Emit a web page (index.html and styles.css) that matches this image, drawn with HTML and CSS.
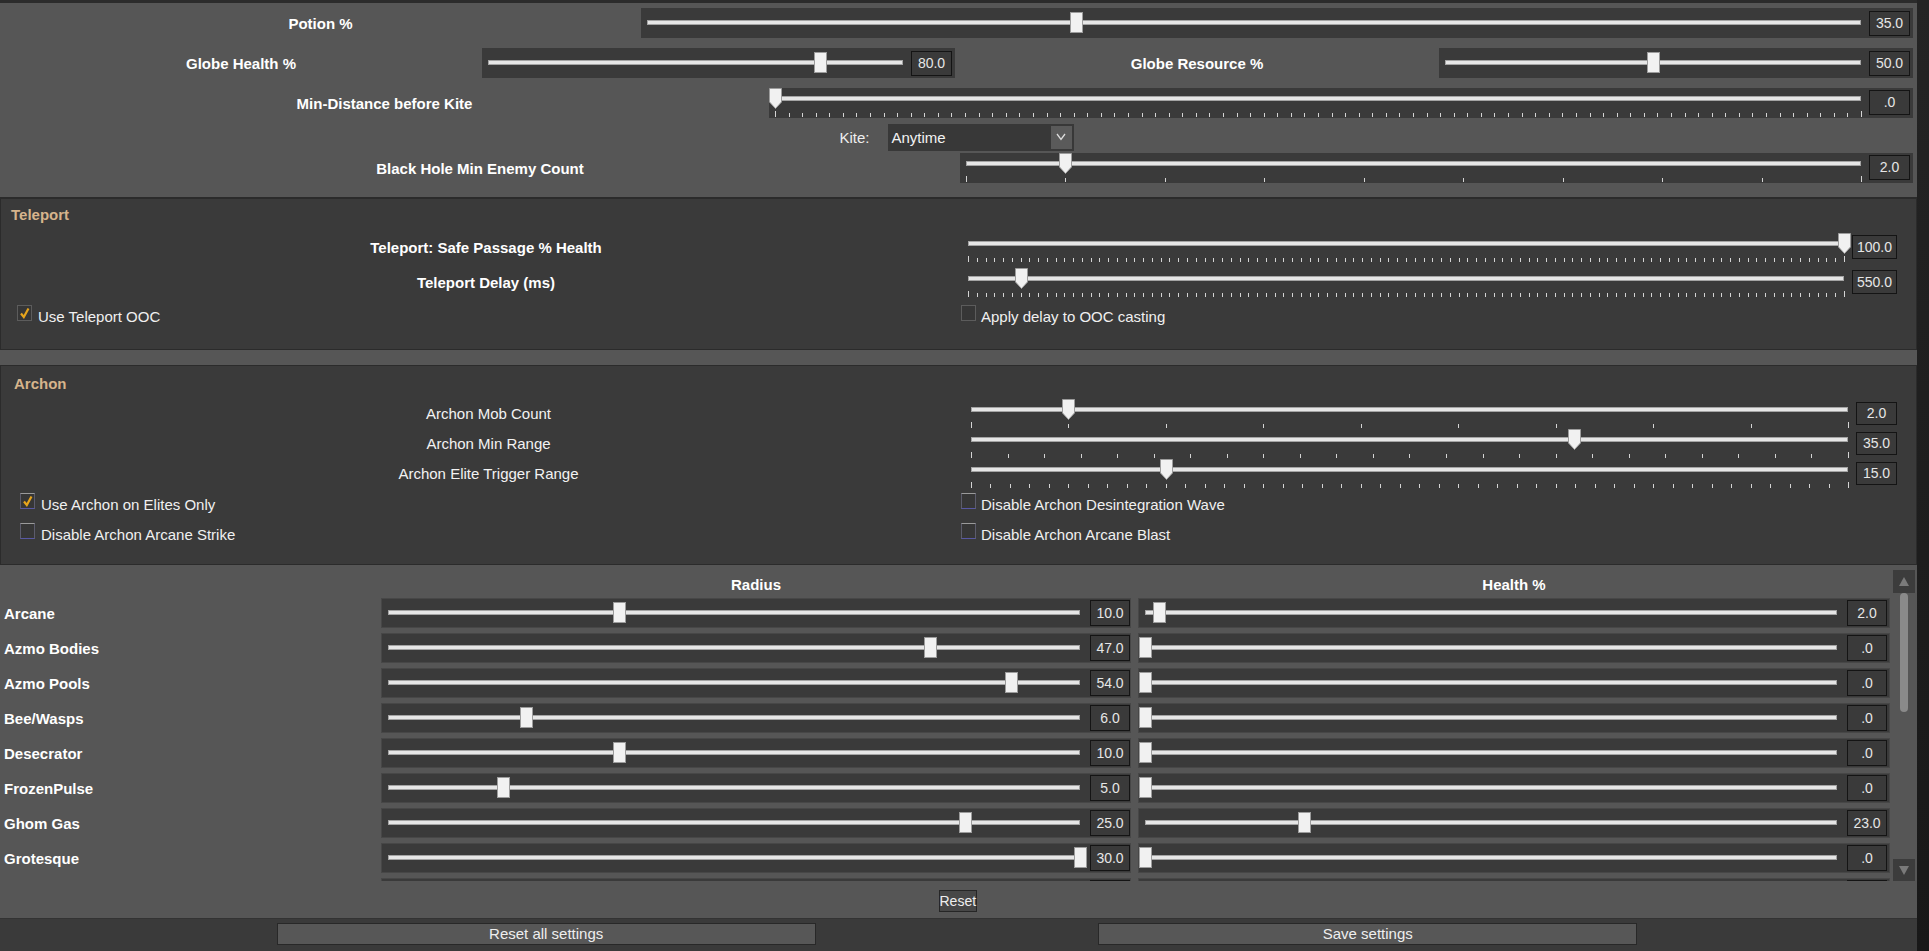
FILE: index.html
```html
<!DOCTYPE html>
<html>
<head>
<meta charset="utf-8">
<title>Settings</title>
<link rel="stylesheet" href="styles.css">
</head>
<body>
<div class="window">
  <div class="main">
    <section class="general">
      <div class="row row-potion">
        <div class="lbl">Potion %</div>
        <div class="sbox">
          <div class="slider" style="--v:.353"><div class="track"></div><div class="thumb"></div></div>
          <div class="val">35.0</div>
        </div>
      </div>
      <div class="row row-globe">
        <div class="lbl">Globe Health %</div>
        <div class="sbox">
          <div class="slider" style="--v:.8"><div class="track"></div><div class="thumb"></div></div>
          <div class="val">80.0</div>
        </div>
        <div class="lbl">Globe Resource %</div>
        <div class="sbox">
          <div class="slider" style="--v:.5"><div class="track"></div><div class="thumb"></div></div>
          <div class="val">50.0</div>
        </div>
      </div>
      <div class="row row-dist">
        <div class="lbl">Min-Distance before Kite</div>
        <div class="sbox ticked">
          <div class="slider" style="--v:0">
            <div class="track"></div><div class="ticks" style="--n:80"></div>
            <svg class="pointer" viewBox="0 0 13 21" width="13" height="21"><path d="M.5 .5h12v13.5l-6 6.5-6-6.5z" fill="#f1f1f1" stroke="#9c9c9c"/></svg>
          </div>
          <div class="val">.0</div>
        </div>
      </div>
      <div class="row row-kite">
        <span class="kite-lbl">Kite:</span>
        <div class="select">
          <span>Anytime</span>
          <span class="select-arrow"><svg viewBox="0 0 10 8" width="10" height="8"><path d="M1 1l4 5.5 4-5.5" fill="none" stroke="#dcdcdc" stroke-width="1.3"/></svg></span>
        </div>
      </div>
      <div class="row row-bh">
        <div class="lbl">Black Hole Min Enemy Count</div>
        <div class="sbox ticked">
          <div class="slider" style="--v:.1111">
            <div class="track"></div><div class="ticks" style="--n:9"></div>
            <svg class="pointer" viewBox="0 0 13 21" width="13" height="21"><path d="M.5 .5h12v13.5l-6 6.5-6-6.5z" fill="#f1f1f1" stroke="#9c9c9c"/></svg>
          </div>
          <div class="val">2.0</div>
        </div>
      </div>
    </section>

    <section class="group teleport">
      <div class="group-title">Teleport</div>
      <div class="grow">
        <div class="glbl bold">Teleport: Safe Passage % Health</div>
        <div class="slider" style="--v:1">
          <div class="track"></div><div class="ticks" style="--n:100"></div>
          <svg class="pointer" viewBox="0 0 13 21" width="13" height="21"><path d="M.5 .5h12v13.5l-6 6.5-6-6.5z" fill="#f1f1f1" stroke="#9c9c9c"/></svg>
        </div>
        <div class="val wide">100.0</div>
      </div>
      <div class="grow">
        <div class="glbl bold">Teleport Delay (ms)</div>
        <div class="slider" style="--v:.061">
          <div class="track"></div><div class="ticks" style="--n:100"></div>
          <svg class="pointer" viewBox="0 0 13 21" width="13" height="21"><path d="M.5 .5h12v13.5l-6 6.5-6-6.5z" fill="#f1f1f1" stroke="#9c9c9c"/></svg>
        </div>
        <div class="val wide">550.0</div>
      </div>
      <div class="crow">
        <label class="check first plain"><span class="box"><svg viewBox="0 0 14 15" width="14" height="15"><path d="M3 7.5l2.8 3.5L10.5 2.5" fill="none" stroke="#e6a41c" stroke-width="2.2"/></svg></span><span class="ctext">Use Teleport OOC</span></label>
        <label class="check plain"><span class="box"></span><span class="ctext">Apply delay to OOC casting</span></label>
      </div>
    </section>

    <section class="group archon">
      <div class="group-title">Archon</div>
      <div class="grow">
        <div class="glbl">Archon Mob Count</div>
        <div class="slider" style="--v:.1111">
          <div class="track"></div><div class="ticks" style="--n:9"></div>
          <svg class="pointer" viewBox="0 0 13 21" width="13" height="21"><path d="M.5 .5h12v13.5l-6 6.5-6-6.5z" fill="#f1f1f1" stroke="#9c9c9c"/></svg>
        </div>
        <div class="val">2.0</div>
      </div>
      <div class="grow">
        <div class="glbl">Archon Min Range</div>
        <div class="slider" style="--v:.6875">
          <div class="track"></div><div class="ticks" style="--n:24"></div>
          <svg class="pointer" viewBox="0 0 13 21" width="13" height="21"><path d="M.5 .5h12v13.5l-6 6.5-6-6.5z" fill="#f1f1f1" stroke="#9c9c9c"/></svg>
        </div>
        <div class="val">35.0</div>
      </div>
      <div class="grow">
        <div class="glbl">Archon Elite Trigger Range</div>
        <div class="slider" style="--v:.2222">
          <div class="track"></div><div class="ticks" style="--n:45"></div>
          <svg class="pointer" viewBox="0 0 13 21" width="13" height="21"><path d="M.5 .5h12v13.5l-6 6.5-6-6.5z" fill="#f1f1f1" stroke="#9c9c9c"/></svg>
        </div>
        <div class="val">15.0</div>
      </div>
      <div class="crow">
        <label class="check first"><span class="box"><svg viewBox="0 0 14 15" width="14" height="15"><path d="M3 7.5l2.8 3.5L10.5 2.5" fill="none" stroke="#e6a41c" stroke-width="2.2"/></svg></span><span class="ctext">Use Archon on Elites Only</span></label>
        <label class="check"><span class="box"></span><span class="ctext">Disable Archon Desintegration Wave</span></label>
      </div>
      <div class="crow crow-2">
        <label class="check first"><span class="box"></span><span class="ctext">Disable Archon Arcane Strike</span></label>
        <label class="check"><span class="box"></span><span class="ctext">Disable Archon Arcane Blast</span></label>
      </div>
    </section>

    <section class="avoid">
      <div class="scroll">
        <div class="scroll-content">
          <div class="list-head"><div></div><div>Radius</div><div class="head-health">Health %</div></div>

          <div class="list-row"><div class="name">Arcane</div>
            <div class="lbox"><div class="slider" style="--v:.3333"><div class="track"></div><div class="thumb"></div></div><div class="val">10.0</div></div>
            <div class="lbox health"><div class="slider" style="--v:.02"><div class="track"></div><div class="thumb"></div></div><div class="val">2.0</div></div>
          </div>
          <div class="list-row"><div class="name">Azmo Bodies</div>
            <div class="lbox"><div class="slider" style="--v:.7833"><div class="track"></div><div class="thumb"></div></div><div class="val">47.0</div></div>
            <div class="lbox health"><div class="slider" style="--v:0"><div class="track"></div><div class="thumb"></div></div><div class="val">.0</div></div>
          </div>
          <div class="list-row"><div class="name">Azmo Pools</div>
            <div class="lbox"><div class="slider" style="--v:.9"><div class="track"></div><div class="thumb"></div></div><div class="val">54.0</div></div>
            <div class="lbox health"><div class="slider" style="--v:0"><div class="track"></div><div class="thumb"></div></div><div class="val">.0</div></div>
          </div>
          <div class="list-row"><div class="name">Bee/Wasps</div>
            <div class="lbox"><div class="slider" style="--v:.2"><div class="track"></div><div class="thumb"></div></div><div class="val">6.0</div></div>
            <div class="lbox health"><div class="slider" style="--v:0"><div class="track"></div><div class="thumb"></div></div><div class="val">.0</div></div>
          </div>
          <div class="list-row"><div class="name">Desecrator</div>
            <div class="lbox"><div class="slider" style="--v:.3333"><div class="track"></div><div class="thumb"></div></div><div class="val">10.0</div></div>
            <div class="lbox health"><div class="slider" style="--v:0"><div class="track"></div><div class="thumb"></div></div><div class="val">.0</div></div>
          </div>
          <div class="list-row"><div class="name">FrozenPulse</div>
            <div class="lbox"><div class="slider" style="--v:.1667"><div class="track"></div><div class="thumb"></div></div><div class="val">5.0</div></div>
            <div class="lbox health"><div class="slider" style="--v:0"><div class="track"></div><div class="thumb"></div></div><div class="val">.0</div></div>
          </div>
          <div class="list-row"><div class="name">Ghom Gas</div>
            <div class="lbox"><div class="slider" style="--v:.8333"><div class="track"></div><div class="thumb"></div></div><div class="val">25.0</div></div>
            <div class="lbox health"><div class="slider" style="--v:.23"><div class="track"></div><div class="thumb"></div></div><div class="val">23.0</div></div>
          </div>
          <div class="list-row"><div class="name">Grotesque</div>
            <div class="lbox"><div class="slider" style="--v:1"><div class="track"></div><div class="thumb"></div></div><div class="val">30.0</div></div>
            <div class="lbox health"><div class="slider" style="--v:0"><div class="track"></div><div class="thumb"></div></div><div class="val">.0</div></div>
          </div>
          <div class="list-row"><div class="name"></div>
            <div class="lbox"><div class="slider" style="--v:1"><div class="track"></div><div class="thumb"></div></div><div class="val"></div></div>
            <div class="lbox health"><div class="slider" style="--v:1"><div class="track"></div><div class="thumb"></div></div><div class="val"></div></div>
          </div>
        </div>
        <div class="vscroll">
          <div class="sb-btn up"><svg viewBox="0 0 10 9" width="10" height="9"><path d="M5 0L10 9H0z" fill="#7a7a7a"/></svg></div>
          <div class="sb-track"><div class="sb-thumb"></div></div>
          <div class="sb-btn down"><svg viewBox="0 0 10 9" width="10" height="9"><path d="M0 0H10L5 9z" fill="#7a7a7a"/></svg></div>
        </div>
      </div>
      <div class="reset-row"><button class="btn-reset">Reset</button></div>
    </section>

    <footer class="footer">
      <button class="btn btn-left">Reset all settings</button>
      <button class="btn btn-right">Save settings</button>
    </footer>
  </div>
  <div class="edge"></div>
</div>
</body>
</html>
```

FILE: styles.css
```css
* { box-sizing: border-box; }
html, body { margin: 0; padding: 0; }
body {
  width: 1929px;
  height: 951px;
  overflow: hidden;
  background: #1d1d1d;
  font-family: "Liberation Sans", Arial, sans-serif;
  font-size: 15px;
  color: #fff;
}
button { font-family: inherit; }

.window { display: flex; height: 951px; }
.main {
  width: 1917px;
  height: 951px;
  display: flex;
  flex-direction: column;
  background: #565656;
}
.edge { flex: 1; background: linear-gradient(#242424, #181818); }

/* ---------- general block ---------- */
.general {
  height: 198px;
  border-top: 3px solid #2b2b2b;
  border-bottom: 1px solid #2b2b2b;
  padding: 5px 4px 0 0;
}
.row { display: grid; align-items: center; height: 30px; }
.row-potion { grid-template-columns: 641px 1fr; margin-bottom: 10px; }
.row-globe { grid-template-columns: 482px 473px 484px 1fr; margin-bottom: 10px; }
.row-dist { grid-template-columns: 769px 1fr; margin-bottom: 6px; }
.row-bh { grid-template-columns: 960px 1fr; }
.row-kite {
  display: flex;
  justify-content: center;
  align-items: center;
  height: 26px;
  margin-bottom: 3px;
}
.lbl { text-align: center; font-weight: bold; }

.sbox {
  display: flex;
  height: 30px;
  background: #3a3a3a;
  padding-right: 3px;
}

/* ---------- slider ---------- */
.slider { position: relative; flex: 1; height: 30px; }
.track {
  position: absolute;
  left: 6px;
  right: 7px;
  top: 12px;
  height: 5px;
  background: #e6e6e6;
  border: 1px solid #a4a4a4;
}
.thumb {
  position: absolute;
  top: 4px;
  left: calc(var(--v) * (100% - 13px));
  width: 13px;
  height: 21px;
  background: #f1f1f1;
  border: 1px solid #9c9c9c;
}
.pointer {
  position: absolute;
  top: 0;
  left: calc(var(--v) * (100% - 13px));
  display: block;
}
.ticked .track, .grow .track { top: 8px; }
.ticks {
  position: absolute;
  left: 6px;
  right: 6px;
  top: 25px;
  height: 4px;
  background: repeating-linear-gradient(90deg, #d4d4d4 0 1px, transparent 1px calc((100% - 1px) / var(--n)));
}
.ticks::before, .ticks::after {
  content: "";
  position: absolute;
  top: -2px;
  width: 1px;
  height: 6px;
  background: #d4d4d4;
}
.ticks::before { left: 0; }
.ticks::after { right: 0; }

.val {
  width: 41px;
  height: 25px;
  margin: 3px 0 0 1px;
  background: #3a3a3a;
  border: 1px solid #141414;
  color: #e6e6e6;
  font-size: 14px;
  line-height: 23px;
  text-align: center;
}
.ticked .val { margin-top: 2px; }

/* ---------- kite dropdown ---------- */
.kite-lbl { color: #eeeeee; margin-right: 18px; }
.select {
  width: 186px;
  height: 27px;
  background: #383838;
  display: flex;
  align-items: center;
  justify-content: space-between;
  padding-left: 4px;
  color: #f2f2f2;
}
.select-arrow {
  width: 21px;
  height: 23px;
  margin-right: 2px;
  background: #5a5a5a;
  display: flex;
  align-items: center;
  justify-content: center;
}

/* ---------- groups ---------- */
.group {
  background: #3a3a3a;
  border: 1px solid #2b2b2b;
}
.group-title { color: #d6b48c; font-weight: bold; line-height: 19px; }
.teleport { padding: 6px 0 26px 10px; }
.archon { margin-top: 15px; padding: 8px 0 23px 12px; }
.teleport .group-title { margin-bottom: 9px; }
.archon .group-title { margin-bottom: 6px; margin-left: 1px; }

.grow { display: grid; align-items: start; height: 30px; }
.teleport .grow { grid-template-columns: 950px 889px 45px; column-gap: 1px; }
.teleport .grow + .grow { margin-top: 5px; }
.archon .grow { grid-template-columns: 951px 890px 41px; column-gap: 1px; }
.glbl { text-align: center; line-height: 30px; color: #f2f2f2; }
.glbl.bold { font-weight: bold; color: #fff; }
.grow .val { margin: 2px 0 0 0; height: 24px; line-height: 22px; }
.archon .grow .val { margin-top: 3px; height: 23px; line-height: 21px; }
.grow .val.wide { width: 45px; }

.crow { display: grid; height: 18px; }
.teleport .crow { grid-template-columns: 950px 1fr; margin-top: 7px; }
.archon .crow { grid-template-columns: 951px 1fr; margin-top: 4px; }
.archon .crow-2 { margin-top: 12px; }
.check { display: flex; align-items: flex-start; color: #f0f0f0; }
.teleport .check.first { margin-left: 6px; }
.archon .check.first { margin-left: 7px; }
.archon .check:not(.first) { margin-left: -3px; }
.box {
  width: 15px;
  height: 16px;
  margin-right: 6px;
  background: #363636;
  border: 1px solid #5c5c6c;
  border-top-color: #9a9a9a;
  border-bottom-color: #5858a4;
  display: block;
}
.box svg { display: block; }
.check.plain .box { border-color: #5c5c5c; }
.check:not(.first) .box { margin-right: 5px; }
.ctext { padding-top: 3px; line-height: 17px; }

/* ---------- avoidance list ---------- */
.avoid {
  flex: 1;
  padding: 5px 2px 0 0;
  display: flex;
  flex-direction: column;
}
.scroll { display: flex; height: 311px; }
.scroll-content { width: 1890px; overflow: hidden; }
.list-head, .list-row {
  display: grid;
  grid-template-columns: 381px 750px 1fr;
}
.list-head {
  height: 28px;
  align-items: center;
  text-align: center;
  font-weight: bold;
}
.head-health { margin-left: 7px; }
.list-row { height: 30px; margin-bottom: 5px; }
.name { font-weight: bold; padding-left: 4px; align-self: center; }
.lbox {
  display: flex;
  height: 30px;
  background: #3a3a3a;
  border: 1px solid #474747;
}
.lbox.health { padding-right: 2px; margin-left: 7px; }
.lbox .slider { height: 28px; }
.lbox .thumb { top: 3px; }
.lbox .track { top: 11px; }
.lbox .val { width: 40px; height: 26px; margin: 1px 0 0 3px; line-height: 24px; }

.vscroll {
  width: 22px;
  margin-left: 3px;
  display: flex;
  flex-direction: column;
}
.sb-btn {
  background: #3c3c3c;
  display: flex;
  align-items: center;
  justify-content: center;
}
.sb-btn.up { height: 23px; }
.sb-btn.down { height: 22px; }
.sb-track { flex: 1; }
.sb-thumb {
  width: 8px;
  height: 119px;
  margin: 0 auto;
  background: #8a8a8a;
  border-radius: 4px;
}

.reset-row { display: flex; justify-content: center; padding-top: 9px; }
.btn-reset {
  width: 38px;
  height: 22px;
  padding: 0;
  background: #474747;
  border: 1px solid #262626;
  color: #eeeeee;
  font-size: 14px;
  line-height: 20px;
}

/* ---------- footer ---------- */
.footer {
  height: 33px;
  background: #3a3a3a;
  border-top: 1px solid #333333;
  padding-top: 4px;
  display: grid;
  grid-template-columns: repeat(7, 1fr);
  align-items: start;
}
.btn {
  height: 22px;
  padding: 0;
  margin: 0 6px 0 3px;
  background: #575757;
  border: 1px solid #282828;
  color: #eeeeee;
  font-size: 15px;
  line-height: 20px;
}
.btn-left { grid-column: 2 / span 2; }
.btn-right { grid-column: 5 / span 2; }
```
